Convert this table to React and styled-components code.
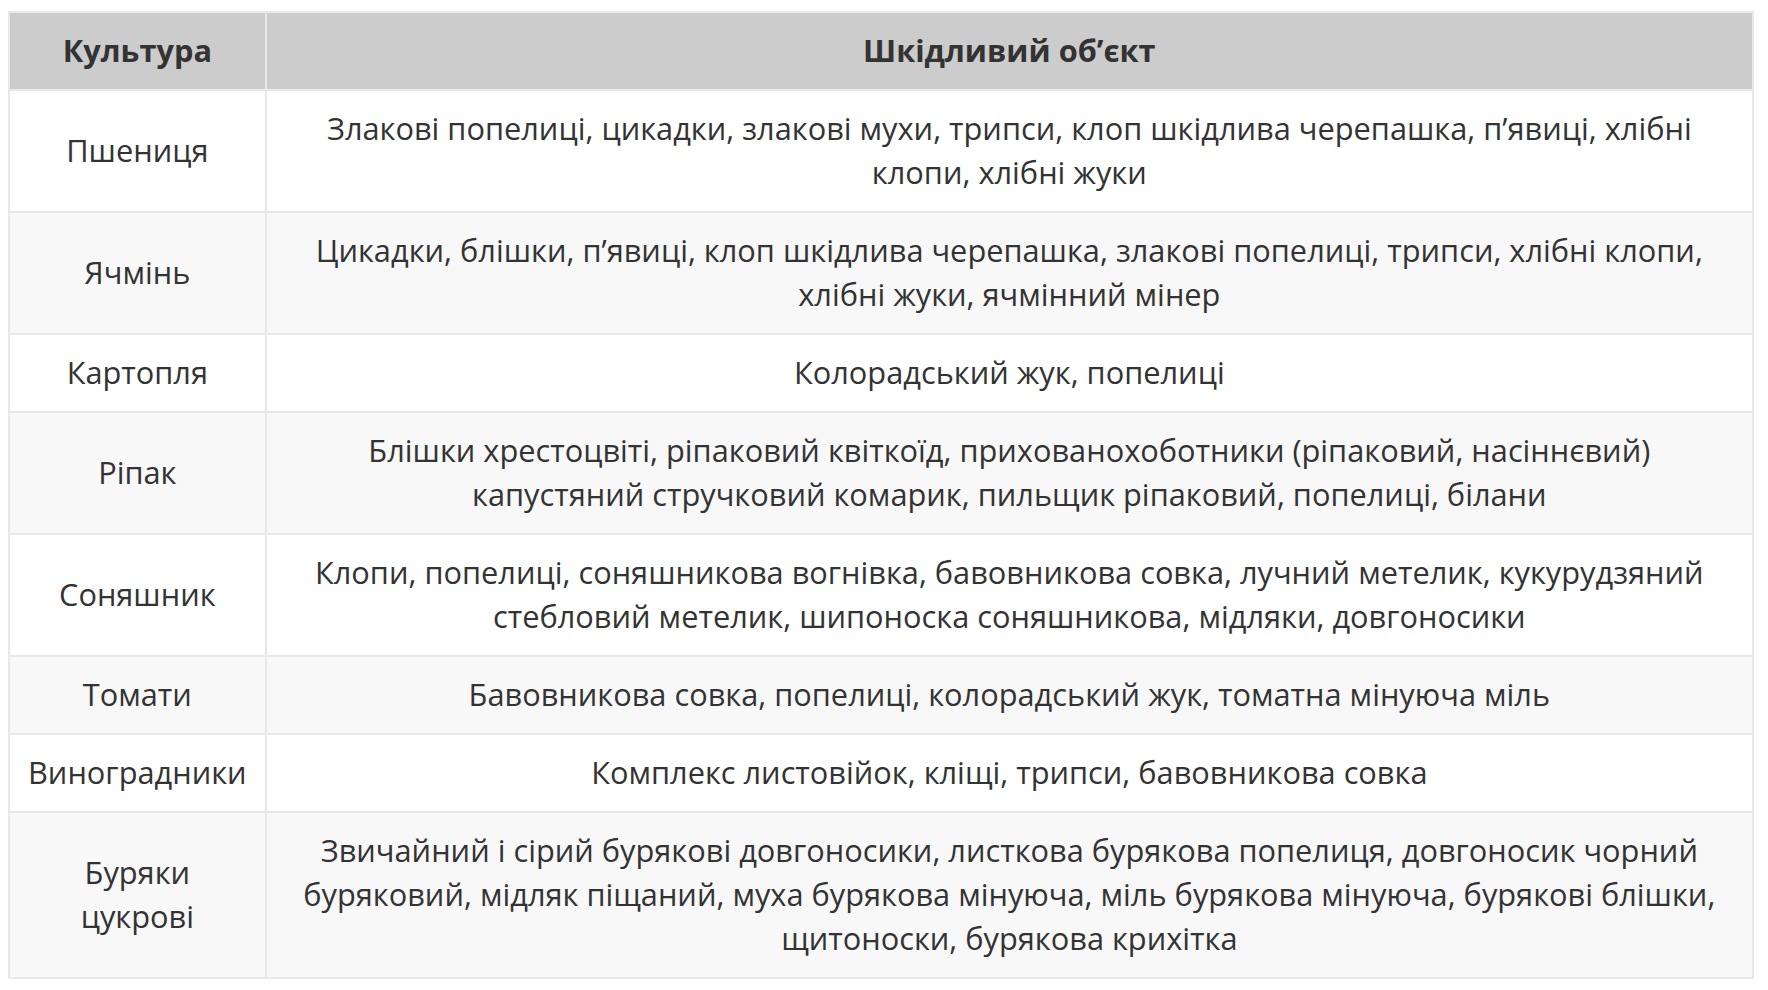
import React from 'react';
import styled, { createGlobalStyle } from 'styled-components';

const rows = [
  ['Пшениця', 'Злакові попелиці, цикадки, злакові мухи, трипси, клоп шкідлива черепашка, п’явиці, хлібні клопи, хлібні жуки'],
  ['Ячмінь', 'Цикадки, блішки, п’явиці, клоп шкідлива черепашка, злакові попелиці, трипси, хлібні клопи, хлібні жуки, ячмінний мінер'],
  ['Картопля', 'Колорадський жук, попелиці'],
  ['Ріпак', 'Блішки хрестоцвіті, ріпаковий квіткоїд, прихованохоботники (ріпаковий, насіннєвий) капустяний стручковий комарик, пильщик ріпаковий, попелиці, білани'],
  ['Соняшник', 'Клопи, попелиці, соняшникова вогнівка, бавовникова совка, лучний метелик, кукурудзяний стебловий метелик, шипоноска соняшникова, мідляки, довгоносики'],
  ['Томати', 'Бавовникова совка, попелиці, колорадський жук, томатна мінуюча міль'],
  ['Виноградники', 'Комплекс листовійок, кліщі, трипси, бавовникова совка'],
  ['Буряки цукрові', 'Звичайний і сірий бурякові довгоносики, листкова бурякова попелиця, довгоносик чорний буряковий, мідляк піщаний, муха бурякова мінуюча, міль бурякова мінуюча, бурякові блішки, щитоноски, бурякова крихітка'],
];

const GlobalStyle = createGlobalStyle`
  body {
    margin: 8px;
    background: #fff;
    font-family: "Open Sans", "Noto Sans", sans-serif;
    color: #333;
  }
`;

const Table = styled.table`
  width: 1746px;
  margin-top: 3px;
  border-collapse: collapse;
  border: 2px solid #e8e8e8;
  font-size: 30.75px;
  line-height: 44px;
`;

const HeadCell = styled.th`
  background: #cccccc;
  font-weight: 700;
  padding: ${(p) => (p.$narrow ? '15px 18px 17px' : '15px 24px 17px')};
  border: 2px solid #e8e8e8;
  text-align: center;
  width: ${(p) => (p.$narrow ? '218px' : 'auto')};
`;

const Row = styled.tr`
  background: ${(p) => (p.$alt ? '#f8f8f8' : '#ffffff')};
`;

const Cell = styled.td`
  padding: ${(p) => (p.$narrow ? '15px 18px 17px' : '15px 24px 17px')};
  border: 2px solid #e8e8e8;
  text-align: center;
  vertical-align: middle;
`;

export default function App() {
  return (
    <>
      <GlobalStyle />
      <Table>
        <thead>
          <tr>
            <HeadCell $narrow>Культура</HeadCell>
            <HeadCell>Шкідливий об’єкт</HeadCell>
          </tr>
        </thead>
        <tbody>
          {rows.map(([crop, pests], i) => (
            <Row key={crop} $alt={i % 2 === 1}>
              <Cell $narrow>{crop}</Cell>
              <Cell>{pests}</Cell>
            </Row>
          ))}
        </tbody>
      </Table>
    </>
  );
}
